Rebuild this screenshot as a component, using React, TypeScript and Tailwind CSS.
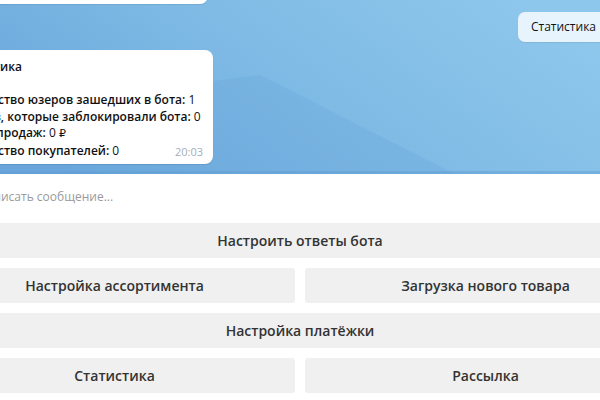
import React from "react";

function Background() {
  return (
    <svg className="absolute inset-0 w-full h-full" viewBox="0 0 600 174" preserveAspectRatio="none">
      <defs>
        <linearGradient id="g1" x1="0" y1="0.7" x2="1" y2="0.3">
          <stop offset="0" stopColor="#6aa7db" />
          <stop offset="0.45" stopColor="#7db9e4" />
          <stop offset="1" stopColor="#8ec7ec" />
        </linearGradient>
      </defs>
      <rect x="0" y="0" width="600" height="174" fill="url(#g1)" />
      <polygon points="0,174 0,110 260,75 455,174" fill="#6aa6da" opacity="0.3" />
      <rect x="0" y="171" width="600" height="3" fill="#5f9bd0" opacity="0.45" />
    </svg>
  );
}

const rows: { label: string; value: React.ReactNode }[] = [
  { label: "Количество юзеров зашедших в бота:", value: "1" },
  { label: "Юзеров, которые заблокировали бота:", value: "0" },
  {
    label: "Сумма продаж:",
    value: (
      <>
        0 <span className="font-['DejaVu_Sans',sans-serif] text-[11px]">₽</span>
      </>
    ),
  },
  { label: "Количество покупателей:", value: "0" },
];

export default function App() {
  return (
    <div className="w-[600px] h-[400px] overflow-hidden bg-white flex flex-col font-['Open_Sans',sans-serif] text-[#222]">
      <div className="relative h-[174px] shrink-0 overflow-hidden">
        <Background />
        <div className="relative flex flex-col">
          <div className="ml-[-60px] mt-[-20px] w-[268px] h-[24px] bg-white rounded-b-[8px] shadow-[0_1px_1px_rgba(0,0,0,0.08)]" />
          <div className="flex justify-end mt-[8px] mr-[-62px]">
            <div className="h-[30px] pl-[13px] pr-[66px] flex items-center bg-[#e8f4fd] rounded-[7px] text-[12px] text-[#111] shadow-[0_1px_1px_rgba(0,0,0,0.08)]">
              Статистика
            </div>
          </div>
          <div className="ml-[-57px] mt-[8px] w-[270px] h-[114px] bg-white rounded-[8px] shadow-[0_1px_1px_rgba(0,0,0,0.1)] relative pl-[10px] pt-[9px] text-[12px] leading-[16.6px] text-[#111]">
            <div className="font-semibold">Статистика</div>
            <div className="h-[16.6px]" />
            {rows.map((r) => (
              <div key={r.label} className="whitespace-nowrap">
                <span className="font-semibold">{r.label}</span> {r.value}
              </div>
            ))}
            <span className="absolute right-[10px] bottom-[3px] text-[11px] text-[#a3afb9]">20:03</span>
          </div>
        </div>
      </div>
      <div className="h-[49px] shrink-0 flex items-center pb-[4px] ml-[-22px] text-[12px] text-[#9a9a9a]">
        Написать сообщение...
      </div>
      <div className="ml-[-66px] w-[732px] flex flex-col gap-[10px] text-[14px] font-semibold text-[#333]">
        <div className="h-[35px] flex items-center justify-center bg-[#f0f0f0] rounded-[3px]">Настроить ответы бота</div>
        <div className="flex gap-[10px]">
          <div className="flex-1 h-[35px] flex items-center justify-center bg-[#f0f0f0] rounded-[3px]">Настройка ассортимента</div>
          <div className="flex-1 h-[35px] flex items-center justify-center bg-[#f0f0f0] rounded-[3px]">Загрузка нового товара</div>
        </div>
        <div className="h-[35px] flex items-center justify-center bg-[#f0f0f0] rounded-[3px]">Настройка платёжки</div>
        <div className="flex gap-[10px]">
          <div className="flex-1 h-[35px] flex items-center justify-center bg-[#f0f0f0] rounded-[3px]">Статистика</div>
          <div className="flex-1 h-[35px] flex items-center justify-center bg-[#f0f0f0] rounded-[3px]">Рассылка</div>
        </div>
      </div>
    </div>
  );
}
